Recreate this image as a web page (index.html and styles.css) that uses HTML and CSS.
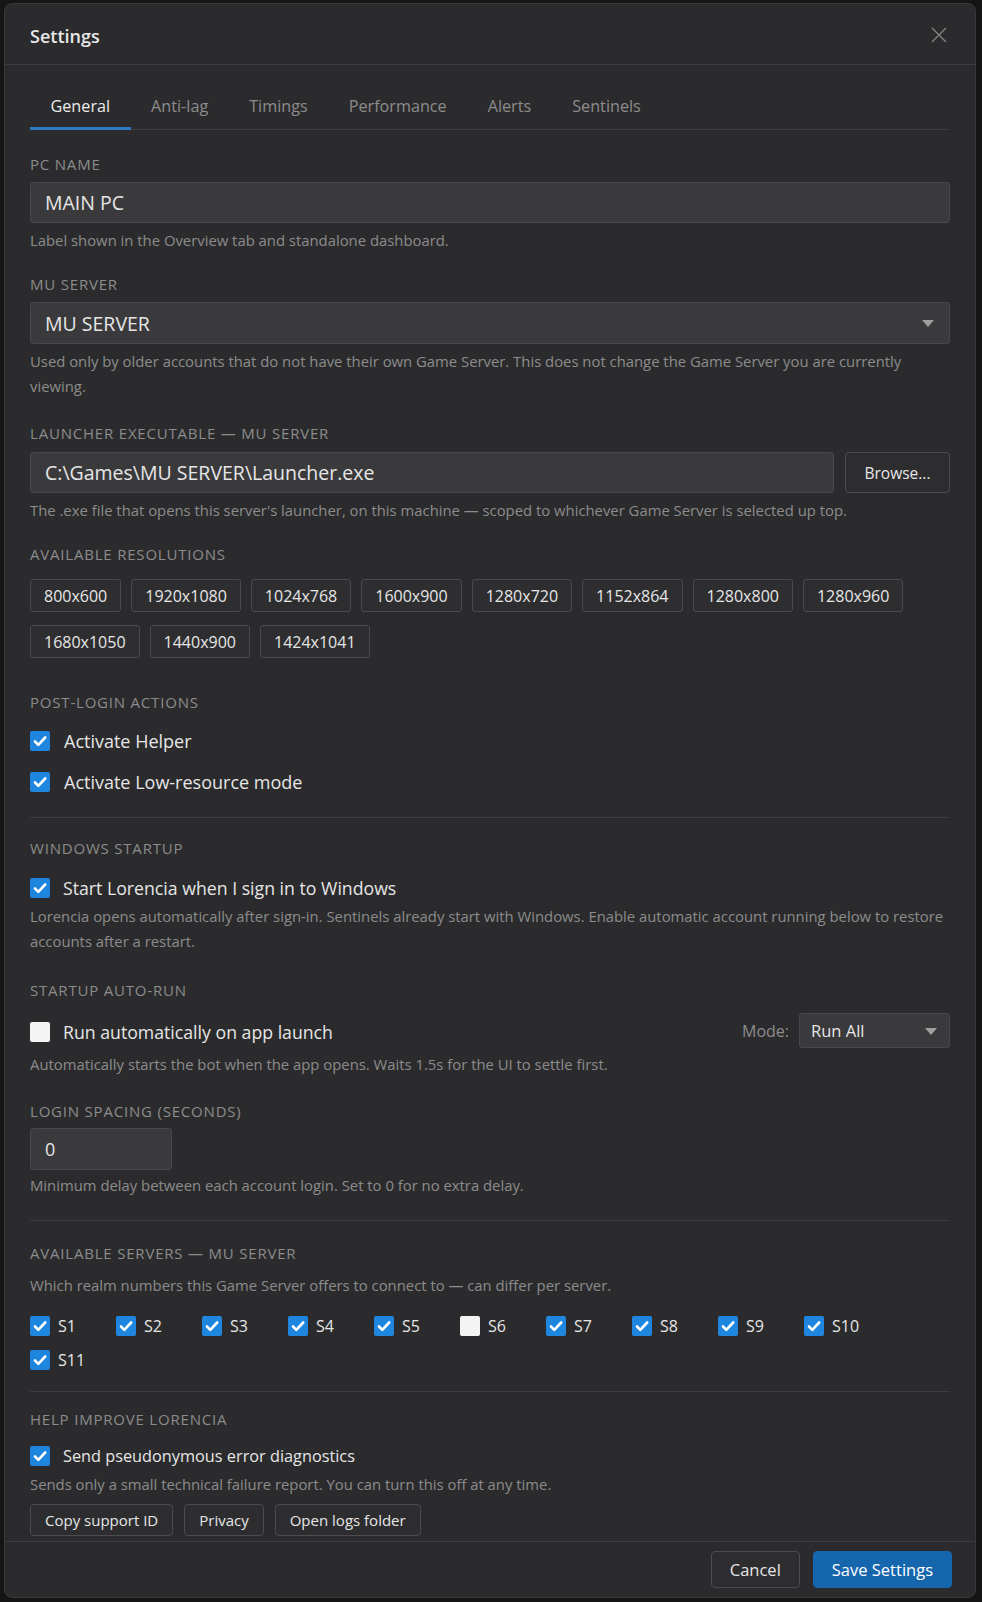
FILE: index.html
```html
<!DOCTYPE html>
<html lang="en">

<head>
  <meta charset="UTF-8">
  <title>Settings</title>
  <link rel="stylesheet" href="styles.css">
</head>

<body>
  <div class="dialog">
    <header class="dialog-header">
      <h1>Settings</h1>
      <button class="close-btn" aria-label="Close">
        <svg width="16" height="16" viewBox="0 0 16 16"><path d="M1 1L15 15M15 1L1 15" stroke="currentColor" stroke-width="1.4" fill="none"/></svg>
      </button>
    </header>

    <div class="dialog-body">
      <nav class="tabs">
        <a class="tab active">General</a>
        <a class="tab">Anti-lag</a>
        <a class="tab">Timings</a>
        <a class="tab">Performance</a>
        <a class="tab">Alerts</a>
        <a class="tab">Sentinels</a>
      </nav>

      <div class="field first">
        <label class="field-label">PC Name</label>
        <input class="text-input" type="text" value="MAIN PC">
        <p class="hint">Label shown in the Overview tab and standalone dashboard.</p>
      </div>

      <div class="field">
        <label class="field-label">MU Server</label>
        <div class="select">MU SERVER<span class="caret"></span></div>
        <p class="hint">Used only by older accounts that do not have their own Game Server. This does not change the Game Server you are currently viewing.</p>
      </div>

      <div class="field launcher">
        <label class="field-label">Launcher executable — MU SERVER</label>
        <div class="path-row">
          <input class="text-input" type="text" value="C:\Games\MU SERVER\Launcher.exe">
          <button class="btn browse">Browse...</button>
        </div>
        <p class="hint">The .exe file that opens this server's launcher, on this machine — scoped to whichever Game Server is selected up top.</p>
      </div>

      <div class="field">
        <label class="field-label">Available resolutions</label>
        <div class="chips">
          <span class="chip">800x600</span>
          <span class="chip">1920x1080</span>
          <span class="chip">1024x768</span>
          <span class="chip">1600x900</span>
          <span class="chip">1280x720</span>
          <span class="chip">1152x864</span>
          <span class="chip">1280x800</span>
          <span class="chip">1280x960</span>
          <span class="chip">1680x1050</span>
          <span class="chip">1440x900</span>
          <span class="chip">1424x1041</span>
        </div>
      </div>

      <div class="field post-login">
        <label class="field-label">Post-login actions</label>
        <div class="check-list">
          <label class="check-row"><span class="check on"><svg viewBox="0 0 20 20"><path d="M5 10.5l3.3 3.3L15.2 6.5"/></svg></span>Activate Helper</label>
          <label class="check-row"><span class="check on"><svg viewBox="0 0 20 20"><path d="M5 10.5l3.3 3.3L15.2 6.5"/></svg></span>Activate Low-resource mode</label>
        </div>
      </div>

      <hr class="divider">

      <div class="field startup">
        <label class="field-label">Windows startup</label>
        <label class="check-row"><span class="check on"><svg viewBox="0 0 20 20"><path d="M5 10.5l3.3 3.3L15.2 6.5"/></svg></span>Start Lorencia when I sign in to Windows</label>
        <p class="hint tight">Lorencia opens automatically after sign-in. Sentinels already start with Windows. Enable automatic account running below to restore accounts after a restart.</p>
      </div>

      <div class="field autorun">
        <label class="field-label">Startup auto-run</label>
        <div class="autorun-row">
          <label class="check-row"><span class="check"></span>Run automatically on app launch</label>
          <div class="mode">
            <span class="mode-label">Mode:</span>
            <div class="select small">Run All<span class="caret"></span></div>
          </div>
        </div>
        <p class="hint">Automatically starts the bot when the app opens. Waits 1.5s for the UI to settle first.</p>
      </div>

      <div class="field spacing">
        <label class="field-label">Login spacing (seconds)</label>
        <input class="text-input number" type="text" value="0">
        <p class="hint">Minimum delay between each account login. Set to 0 for no extra delay.</p>
      </div>

      <hr class="divider wide">

      <div class="field servers">
        <label class="field-label">Available servers — MU SERVER</label>
        <p class="hint">Which realm numbers this Game Server offers to connect to — can differ per server.</p>
        <div class="server-grid">
          <label class="server"><span class="check on"><svg viewBox="0 0 20 20"><path d="M5 10.5l3.3 3.3L15.2 6.5"/></svg></span>S1</label>
          <label class="server"><span class="check on"><svg viewBox="0 0 20 20"><path d="M5 10.5l3.3 3.3L15.2 6.5"/></svg></span>S2</label>
          <label class="server"><span class="check on"><svg viewBox="0 0 20 20"><path d="M5 10.5l3.3 3.3L15.2 6.5"/></svg></span>S3</label>
          <label class="server"><span class="check on"><svg viewBox="0 0 20 20"><path d="M5 10.5l3.3 3.3L15.2 6.5"/></svg></span>S4</label>
          <label class="server"><span class="check on"><svg viewBox="0 0 20 20"><path d="M5 10.5l3.3 3.3L15.2 6.5"/></svg></span>S5</label>
          <label class="server"><span class="check"></span>S6</label>
          <label class="server"><span class="check on"><svg viewBox="0 0 20 20"><path d="M5 10.5l3.3 3.3L15.2 6.5"/></svg></span>S7</label>
          <label class="server"><span class="check on"><svg viewBox="0 0 20 20"><path d="M5 10.5l3.3 3.3L15.2 6.5"/></svg></span>S8</label>
          <label class="server"><span class="check on"><svg viewBox="0 0 20 20"><path d="M5 10.5l3.3 3.3L15.2 6.5"/></svg></span>S9</label>
          <label class="server"><span class="check on"><svg viewBox="0 0 20 20"><path d="M5 10.5l3.3 3.3L15.2 6.5"/></svg></span>S10</label>
          <label class="server"><span class="check on"><svg viewBox="0 0 20 20"><path d="M5 10.5l3.3 3.3L15.2 6.5"/></svg></span>S11</label>
        </div>
      </div>

      <hr class="divider">

      <div class="field diagnostics">
        <label class="field-label">Help improve Lorencia</label>
        <label class="check-row"><span class="check on"><svg viewBox="0 0 20 20"><path d="M5 10.5l3.3 3.3L15.2 6.5"/></svg></span>Send pseudonymous error diagnostics</label>
        <p class="hint tight">Sends only a small technical failure report. You can turn this off at any time.</p>
        <div class="button-row">
          <button class="btn">Copy support ID</button>
          <button class="btn">Privacy</button>
          <button class="btn">Open logs folder</button>
        </div>
      </div>
    </div>

    <footer class="dialog-footer">
      <button class="btn footer-btn">Cancel</button>
      <button class="btn footer-btn primary">Save Settings</button>
    </footer>
  </div>
</body>

</html>
```

FILE: styles.css
```css
:root {
  --bg-outer: #151516;
  --bg-dialog: #2b2b2d;
  --bg-input: #3a3a3c;
  --border-color: #3d3d3f;
  --input-border: #48484a;
  --text-color: #e6e6e6;
  --muted-color: #8c8c8c;
  --accent: #1f86e0;
  --primary: #1666ad;
}

* {
  box-sizing: border-box;
}

body {
  margin: 0;
  padding: 3px 6px 4px 4px;
  background-color: var(--bg-outer);
  font-family: "Open Sans", "Noto Sans", sans-serif;
  color: var(--text-color);
}

.dialog {
  background-color: var(--bg-dialog);
  border: 1px solid #38383a;
  border-radius: 8px;
  overflow: hidden;
}

/* header */
.dialog-header {
  display: flex;
  align-items: center;
  justify-content: space-between;
  height: 61px;
  padding: 4px 28px 0 25px;
  border-bottom: 1px solid var(--border-color);
}

.dialog-header h1 {
  margin: 0;
  font-size: 18px;
  font-weight: 600;
  color: #e8e8e8;
}

.close-btn {
  background: none;
  border: none;
  padding: 0;
  margin-top: -3px;
  color: #858585;
  display: flex;
}

/* body */
.dialog-body {
  padding: 30px 25px 5px 25px;
}

.tabs {
  display: flex;
  border-bottom: 1px solid var(--border-color);
  margin-bottom: 25px;
}

.tab {
  padding: 0 20.5px 10px;
  font-size: 16.2px;
  line-height: 22px;
  color: var(--muted-color);
  margin-bottom: -1px;
  border-bottom: 3px solid transparent;
}

.tab.active {
  color: #ececec;
  border-bottom-color: #2a7bc2;
}

.field {
  margin-top: 22px;
}

.field.first {
  margin-top: 0;
}

.field-label {
  display: block;
  font-size: 15px;
  line-height: 19px;
  letter-spacing: 0.8px;
  text-transform: uppercase;
  color: var(--muted-color);
  margin-bottom: 8px;
}

.hint {
  margin: 5px 0 0;
  font-size: 14.85px;
  line-height: 25px;
  color: var(--muted-color);
}

.hint.tight {
  margin-top: 1px;
}

.text-input {
  display: block;
  width: 100%;
  height: 41px;
  padding: 0 14px;
  background-color: var(--bg-input);
  border: 1px solid var(--input-border);
  border-radius: 3px;
  font-family: inherit;
  font-size: 19.5px;
  color: var(--text-color);
  outline: none;
}

.text-input.number {
  width: 142px;
  height: 42px;
  font-size: 18px;
}

.select {
  position: relative;
  display: flex;
  align-items: center;
  height: 42px;
  padding: 0 14px;
  background-color: var(--bg-input);
  border: 1px solid var(--input-border);
  border-radius: 3px;
  font-size: 19.5px;
  color: var(--text-color);
}

.caret {
  position: absolute;
  right: 15px;
  top: 50%;
  margin-top: -3px;
  border-left: 6px solid transparent;
  border-right: 6px solid transparent;
  border-top: 7px solid #a0a0a0;
}

.select.small {
  width: 151px;
  height: 35px;
  padding: 0 11px;
  font-size: 16.5px;
}

.select.small .caret {
  right: 12px;
}

.launcher {
  margin-top: 25px;
}

.launcher .field-label {
  margin-bottom: 9px;
}

.path-row {
  display: flex;
  gap: 11px;
}

.path-row .text-input {
  flex: 1;
}

.btn {
  font-family: inherit;
  font-size: 15px;
  color: var(--text-color);
  background-color: #2d2d2f;
  border: 1px solid #4c4c4e;
  border-radius: 4px;
  padding: 0 14px;
  height: 32px;
}

.browse {
  width: 105px;
  height: 41px;
  font-size: 15.5px;
}

/* resolutions */
.chips {
  display: flex;
  flex-wrap: wrap;
  gap: 13px 10px;
  margin-top: 15px;
}

.chip {
  display: inline-flex;
  align-items: center;
  height: 33px;
  padding: 0 13px;
  border: 1px solid #4a4a4c;
  border-radius: 3px;
  background-color: #2e2e30;
  font-size: 16px;
}

/* checkboxes */
.check {
  display: inline-flex;
  align-items: center;
  justify-content: center;
  flex: none;
  width: 20px;
  height: 20px;
  border-radius: 2px;
  background-color: #f4f4f4;
}

.check.on {
  background-color: var(--accent);
}

.check svg {
  width: 20px;
  height: 20px;
  fill: none;
  stroke: #fff;
  stroke-width: 2.6;
  stroke-linecap: round;
  stroke-linejoin: round;
}

.check-row {
  display: flex;
  align-items: center;
  gap: 14px;
  height: 30px;
  font-size: 18px;
  color: var(--text-color);
}

.check-list {
  display: flex;
  flex-direction: column;
  gap: 11px;
  margin-top: 14px;
}

.post-login {
  margin-top: 35px;
}

.divider {
  border: none;
  border-top: 1px solid var(--border-color);
  margin: 20px 0 0;
}

.divider.wide {
  margin-top: 22px;
}

.startup {
  margin-top: 21px;
}

.startup .check-row {
  margin-top: 15px;
  gap: 13px;
  font-size: 17.7px;
}

.autorun {
  margin-top: 27px;
}

.autorun-row {
  display: flex;
  align-items: center;
  justify-content: space-between;
  margin-top: 13px;
}

.autorun-row .check-row {
  gap: 13px;
  font-size: 17.7px;
  padding-top: 3px;
}

.mode {
  display: flex;
  align-items: center;
  gap: 10px;
}

.mode-label {
  font-size: 16px;
  color: var(--muted-color);
}

.autorun .hint {
  margin-top: 4px;
}

.spacing {
  margin-top: 25px;
}

.spacing .field-label {
  margin-bottom: 7px;
}

.spacing .hint {
  margin-top: 3px;
}

/* servers */
.servers {
  margin-top: 23px;
}

.servers .hint {
  margin-top: 10px;
}

.server-grid {
  display: flex;
  flex-wrap: wrap;
  gap: 12px 12px;
  margin-top: 17px;
}

.server {
  display: flex;
  align-items: center;
  gap: 8px;
  width: 74px;
  height: 22px;
  font-size: 16px;
}

.diagnostics {
  margin-top: 18px;
}

.diagnostics .check-row {
  margin-top: 12px;
  gap: 13px;
  font-size: 16.3px;
}

.button-row {
  display: flex;
  gap: 11px;
  margin-top: 7px;
}

/* footer */
.dialog-footer {
  display: flex;
  justify-content: flex-end;
  gap: 13px;
  padding: 9px 23px 9px 25px;
  border-top: 1px solid var(--border-color);
}

.footer-btn {
  height: 37px;
  font-size: 16.5px;
  padding: 0 18px;
}

.footer-btn.primary {
  background-color: var(--primary);
  border-color: var(--primary);
  color: #fff;
}
```
